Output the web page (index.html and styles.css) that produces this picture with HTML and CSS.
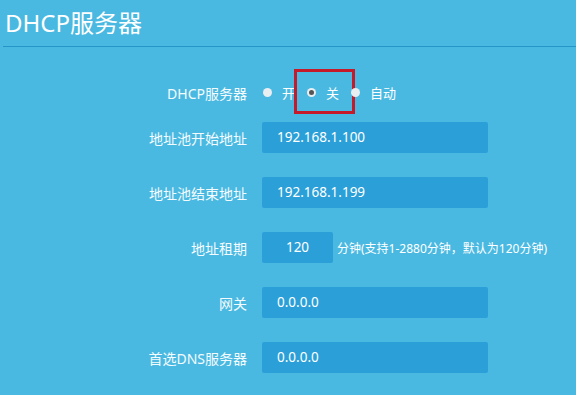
FILE: index.html
```html
<!DOCTYPE html>
<html lang="zh-CN">
<head>
    <meta charset="UTF-8">
    <meta name="viewport" content="width=device-width, initial-scale=1.0">
    <title>DHCP服务器</title>
    <link rel="stylesheet" href="styles.css">
</head>
<body>
    <div class="page">
        <h1 class="title">DHCP服务器</h1>

        <div class="form">
            <div class="row row-radio">
                <span class="label">DHCP服务器</span>
                <div class="radios">
                    <label class="radio"><span class="dot"></span>开</label>
                    <label class="radio radio-on"><span class="dot"></span>关<span class="mark"></span></label>
                    <label class="radio"><span class="dot"></span>自动</label>
                </div>
            </div>

            <div class="row">
                <span class="label">地址池开始地址</span>
                <div class="field">192.168.1.100</div>
            </div>

            <div class="row">
                <span class="label">地址池结束地址</span>
                <div class="field">192.168.1.199</div>
            </div>

            <div class="row">
                <span class="label">地址租期</span>
                <div class="field field-short">120</div>
                <span class="hint">分钟(支持1-2880分钟，默认为120分钟)</span>
            </div>

            <div class="row">
                <span class="label">网关</span>
                <div class="field">0.0.0.0</div>
            </div>

            <div class="row">
                <span class="label">首选DNS服务器</span>
                <div class="field">0.0.0.0</div>
            </div>
        </div>
    </div>
</body>
</html>
```

FILE: styles.css
```css
body {
    margin: 0;
    font-family: "Noto Sans", "Noto Sans CJK SC", sans-serif;
    background-color: #4ab9e1;
    color: #fff;
}
.page {
    height: 395px;
    overflow: hidden;
}
.title {
    margin: 0 0 0 3px;
    padding-left: 2px;
    font-size: 24px;
    font-weight: normal;
    line-height: 46px;
    border-bottom: 1px solid #2596c8;
}
.form {
    padding-top: 30px;
}
.row {
    display: flex;
    align-items: center;
    height: 31px;
    margin-bottom: 24px;
}
.row-radio {
    margin-bottom: 14px;
}
.label {
    width: 247px;
    text-align: right;
    font-size: 14px;
    margin-right: 15px;
    color: #f4fbfe;
}
.radios {
    display: flex;
    align-items: center;
    margin-left: 1px;
    font-size: 13px;
}
.radio {
    position: relative;
    display: flex;
    align-items: center;
    margin-right: 12px;
}
.dot {
    width: 9px;
    height: 9px;
    border-radius: 50%;
    background-color: #e9eef1;
    margin-right: 10px;
    position: relative;
}
.radio-on .dot::after {
    content: "";
    position: absolute;
    left: 2px;
    top: 2px;
    width: 5px;
    height: 5px;
    border-radius: 50%;
    background-color: #555;
}
.mark {
    position: absolute;
    left: -13px;
    top: -14px;
    box-sizing: border-box;
    width: 61px;
    height: 45px;
    border: 3px solid #c41a2a;
}
.field {
    width: 211px;
    height: 31px;
    line-height: 31px;
    padding-left: 15px;
    background-color: #2ba0d8;
    border-radius: 2px;
    font-size: 13.5px;
}
.field-short {
    width: 71px;
    padding-left: 0;
    text-align: center;
    margin-right: 4px;
}
.hint {
    font-size: 12px;
}
```
